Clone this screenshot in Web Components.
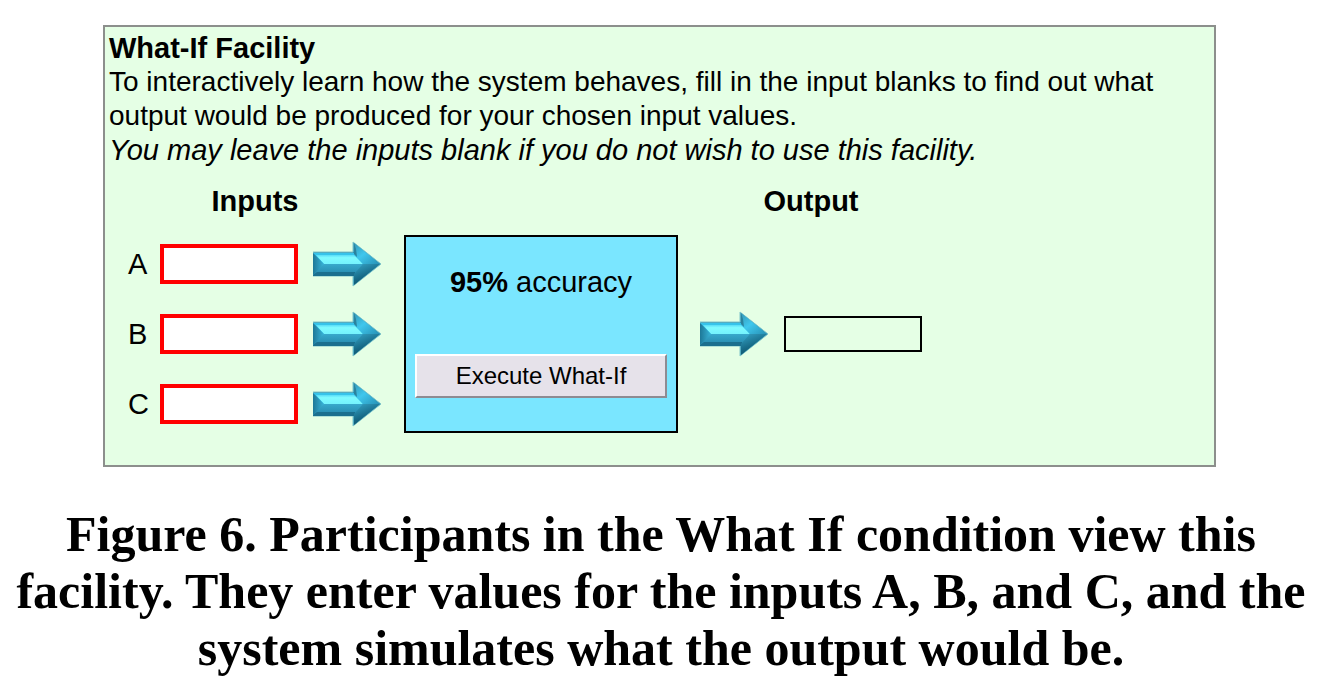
<!DOCTYPE html>
<html lang="en">
<head>
<meta charset="utf-8">
<title>What-If Facility</title>
<style>
  body { margin: 0; background: #fff; color: #000; font-family: "Liberation Sans", Arial, sans-serif; }
</style>
</head>
<body>
<figure-page></figure-page>
<script>
const define = (name, html) => customElements.define(name, class extends HTMLElement {
  constructor() {
    super();
    const t = document.createElement('template');
    t.innerHTML = html;
    this.attachShadow({ mode: 'open' }).append(t.content.cloneNode(true));
  }
  connectedCallback() {
    const label = this.shadowRoot.querySelector('label');
    if (label && this.hasAttribute('name')) label.textContent = this.getAttribute('name');
  }
});

define('flow-arrow', `
  <style>:host { display: block; flex: none; width: 69px; height: 46px } svg { display: block }</style>
  <svg width="69" height="46" viewBox="0 0 69 46" aria-hidden="true">
    <defs>
      <linearGradient id="lower" x1="0" y1="0" x2="0" y2="1"><stop offset="0" stop-color="#38a9cc"/><stop offset="1" stop-color="#2588ac"/></linearGradient>
      <linearGradient id="light" x1="0" y1="0" x2="0" y2="1"><stop offset="0" stop-color="#58dcf8"/><stop offset=".3" stop-color="#7ffbff"/><stop offset="1" stop-color="#74f2fd"/></linearGradient>
      <linearGradient id="side" x1="0" y1="0" x2="1" y2="0"><stop offset="0" stop-color="#1d7898"/><stop offset="1" stop-color="#39b4d8"/></linearGradient>
      <linearGradient id="wing" x1="0" y1="0" x2="1" y2="1"><stop offset="0" stop-color="#3498b6"/><stop offset=".45" stop-color="#3fc7ed"/><stop offset="1" stop-color="#2790b4"/></linearGradient>
      <linearGradient id="under" x1="0" y1="0" x2=".5" y2="1"><stop offset="0" stop-color="#36a4c7"/><stop offset=".6" stop-color="#176b88"/><stop offset="1" stop-color="#0b4a60"/></linearGradient>
    </defs>
    <path d="M0 11H40V1L68 23L40 45V35H0Z" fill="#2c96b9" stroke="#7fc4c9" stroke-width="1"/>
    <path d="M0 12H42L50 23H10Z" fill="#36c3ea"/>
    <path d="M3 14H41L50 23H11Z" fill="url(#light)"/>
    <path d="M10 23H50L42 34H0Z" fill="url(#lower)"/>
    <path d="M0 34L4 31H42V35H0Z" fill="#1b6f8e"/>
    <path d="M0 12L11 23L0 34Z" fill="url(#side)"/>
    <path d="M41 2L67 23H50L41 13Z" fill="url(#wing)"/>
    <path d="M50 23H67L41 44V33Z" fill="url(#under)"/>
    <path d="M41 2V13L44 16L43 8Z" fill="#2b829d"/>
  </svg>`);

define('input-row', `
  <style>
    :host { display: flex; align-items: center; height: 46px }
    label { width: 32px; line-height: 34px }
    input { box-sizing: border-box; width: 138px; height: 40px; margin: 0 15px 0 0; padding: 0 8px;
      border: 4px solid #f00; border-radius: 0; background: #fff; font: inherit; outline: 0 }
  </style>
  <label for="value"></label><input id="value" type="text"><flow-arrow></flow-arrow>`);

define('system-model', `
  <style>
    :host { box-sizing: border-box; display: flex; flex-direction: column; gap: 55px;
      width: 274px; padding: 28px 9px 33px; border: 2px solid #000; background: #7ae6ff }
    p { margin: 0; line-height: 34px; text-align: center }
    button { height: 44px; padding: 0; border: 2px solid; border-color: #fff #8e8b92 #8e8b92 #fff;
      border-radius: 0; background: #e6e2ea; color: #000; font: 24px "Liberation Sans", Arial, sans-serif }
  </style>
  <p><slot></slot></p>
  <button type="button">Execute What-If</button>`);

define('output-row', `
  <style>
    :host { display: flex; align-items: center; gap: 15px }
    input { box-sizing: border-box; width: 138px; height: 36px; margin: 0; padding: 0 8px;
      border: 2px solid #000; border-radius: 0; background: transparent; font: inherit; outline: 0 }
  </style>
  <flow-arrow></flow-arrow><input type="text" readonly aria-label="Output">`);

define('what-if-facility', `
  <style>
    :host { display: block; padding: 4px 4px 32px; border: 2px solid #8c8f8c; background: #e5ffe5; font-size: 29px; line-height: 34px }
    h2, h3, p { margin: 0; font-size: inherit }
    .intro { font-size: 28px }
    .diagram { display: grid; grid-template-columns: repeat(3, max-content); gap: 17px 22px; align-items: center;
      padding: 17px 0 0 19px }
    h3 { text-align: center }
    .output { grid-column: 3 }
    .inputs { display: grid; gap: 24px }
  </style>
  <h2>What-If Facility</h2>
  <p class="intro">To interactively learn how the system behaves, fill in the input blanks to find out what output would be produced for your chosen input values.</p>
  <p><em>You may leave the inputs blank if you do not wish to use this facility.</em></p>
  <div class="diagram">
    <h3>Inputs</h3>
    <h3 class="output">Output</h3>
    <div class="inputs">
      <input-row name="A"></input-row>
      <input-row name="B"></input-row>
      <input-row name="C"></input-row>
    </div>
    <system-model><b>95%</b> accuracy</system-model>
    <output-row></output-row>
  </div>`);

define('figure-page', `
  <style>
    :host { display: block; padding: 25px 10px 0 }
    figure { margin: 0 }
    what-if-facility { margin: 0 104px 0 93px }
    figcaption { margin-top: 39px; padding-right: 8px; text-align: center; font: bold 50px/57px "Liberation Serif", "Times New Roman", serif }
  </style>
  <figure>
    <what-if-facility></what-if-facility>
    <figcaption>Figure 6. Participants in the What If condition view this facility. They enter values for the inputs A, B, and C, and the system simulates what the output would be.</figcaption>
  </figure>`);
</script>
</body>
</html>
